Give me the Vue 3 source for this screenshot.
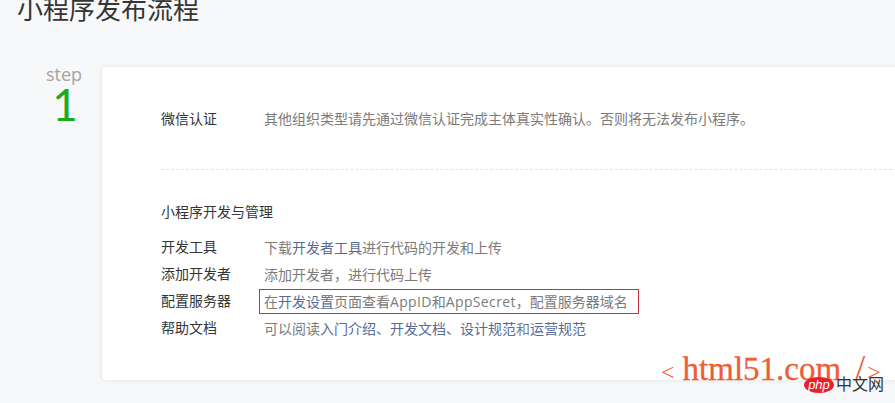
<template>
  <div class="page">
    <h1 class="title">小程序发布流程</h1>

    <div class="step-row">
      <div class="step-no">
        <div class="step-word">step</div>
        <div class="step-num">1</div>
      </div>

      <div class="card">
        <div class="section first">
          <div class="row">
            <span class="label">微信认证</span>
            <span class="value">其他组织类型请先通过微信认证完成主体真实性确认。否则将无法发布小程序。</span>
          </div>
        </div>

        <div class="section">
          <h3 class="sub">小程序开发与管理</h3>
          <div v-for="row in rows" :key="row.label" class="row tight">
            <span class="label">{{ row.label }}</span>
            <span class="value" :class="{ marked: row.marked }">
              <template v-for="(part, i) in row.parts" :key="i">
                <a v-if="part.link" class="link">{{ part.text }}</a>
                <span v-else-if="part.latin" class="latin">{{ part.text }}</span>
                <template v-else>{{ part.text }}</template>
              </template>
            </span>
          </div>
        </div>
      </div>
    </div>

    <!-- 水印 -->
    <div class="mark-site">
      <span class="angle">&lt;</span>
      <span class="site">html51.com</span>
      <span class="slash">/</span>
      <span class="angle">&gt;</span>
    </div>
    <div class="mark-php">
      <span class="php-logo">php</span>
      <span class="php-text">中文网</span>
    </div>
  </div>
</template>

<script setup>
const rows = [
  {
    label: '开发工具',
    parts: [
      { text: '下载' },
      { text: '开发者工具', link: true },
      { text: '进行代码的开发和上传' },
    ],
  },
  {
    label: '添加开发者',
    parts: [{ text: '添加开发者，进行代码上传' }],
  },
  {
    label: '配置服务器',
    marked: true,
    parts: [
      { text: '在' },
      { text: '开发设置', link: true },
      { text: '页面查看' },
      { text: 'AppID', latin: true },
      { text: '和' },
      { text: 'AppSecret', latin: true },
      { text: '，配置服务器域名' },
    ],
  },
  {
    label: '帮助文档',
    parts: [
      { text: '可以阅读' },
      { text: '入门介绍', link: true },
      { text: '、' },
      { text: '开发文档', link: true },
      { text: '、' },
      { text: '设计规范', link: true },
      { text: '和' },
      { text: '运营规范', link: true },
    ],
  },
];
</script>

<style>
html,
body {
  margin: 0;
  background: #f7f8fa;
}
</style>

<style scoped>
.page {
  position: relative;
  width: 895px;
  height: 403px;
  overflow: hidden;
  background: #f7f8fa;
  font-family: "Liberation Sans", "Noto Sans CJK SC", sans-serif;
}

.title {
  margin: -8px 0 0 17px;
  font-size: 26px;
  font-weight: 400;
  line-height: 36px;
  color: #353535;
}

.step-row {
  display: flex;
  margin-top: 39px;
}

.step-no {
  width: 102px;
  padding-left: 28px;
  box-sizing: border-box;
  flex: none;
  text-align: center;
}

.step-word {
  width: 74px;
  margin-left: -1px;
  font-family: "Open Sans", sans-serif;
  font-size: 18px;
  line-height: 15px;
  color: #a3a3a3;
}

.step-num {
  width: 74px;
  font-family: Lato, sans-serif;
  font-size: 44px;
  line-height: 44px;
  color: #1aad19;
}

.card {
  flex: none;
  width: 820px;
  height: 313px;
  box-sizing: border-box;
  padding: 0 0 0 59px;
  background: #fff;
  border-radius: 4px;
  box-shadow: 0 0 4px rgba(0, 0, 0, 0.1);
  font-size: 14px;
  color: #353535;
}

.section.first {
  height: 103px;
  padding-top: 41px;
  box-sizing: border-box;
  border-bottom: 1px dashed #e4e4e4;
}

.sub {
  margin: 31px 0 11px;
  font-size: 14px;
  font-weight: 400;
  line-height: 22px;
}

.row {
  display: flex;
  line-height: 22px;
}

.row.tight {
  height: 27px;
  line-height: 27px;
}

.label {
  width: 103px;
  flex: none;
}

.value {
  position: relative;
  color: #7b7b7b;
  font-family: "Open Sans", "Noto Sans CJK SC", sans-serif;
  white-space: nowrap;
}

.link {
  color: #576b95;
}

.latin {
  letter-spacing: 0.35px;
}

/* 截图上的红色标注框 */
.marked::after {
  content: "";
  position: absolute;
  left: -5px;
  right: -11px;
  top: 1px;
  height: 23px;
  border: 1px solid #c8323f;
}

.mark-site {
  position: absolute;
  left: 661px;
  top: 349px;
  display: flex;
  align-items: baseline;
  font-family: "Liberation Serif", serif;
  line-height: 38px;
  color: #ee5d36;
  white-space: nowrap;
}

.site {
  margin: 0 14px 0 8px;
  font-size: 33px;
  -webkit-text-stroke: 0.3px #ee5d36;
}

.angle {
  font-size: 24px;
}

.slash {
  font-size: 36px;
  margin-right: 2px;
}

.mark-php {
  position: absolute;
  left: 804px;
  top: 376px;
  display: flex;
  align-items: center;
  gap: 2px;
}

.php-logo {
  width: 30px;
  height: 16px;
  border-radius: 50%;
  background: #e8202a;
  color: #fff;
  font-family: "Liberation Sans", sans-serif;
  font-size: 13px;
  font-style: italic;
  line-height: 15px;
  text-align: center;
}

.php-text {
  font-size: 16px;
  line-height: 18px;
  color: #333;
}
</style>
